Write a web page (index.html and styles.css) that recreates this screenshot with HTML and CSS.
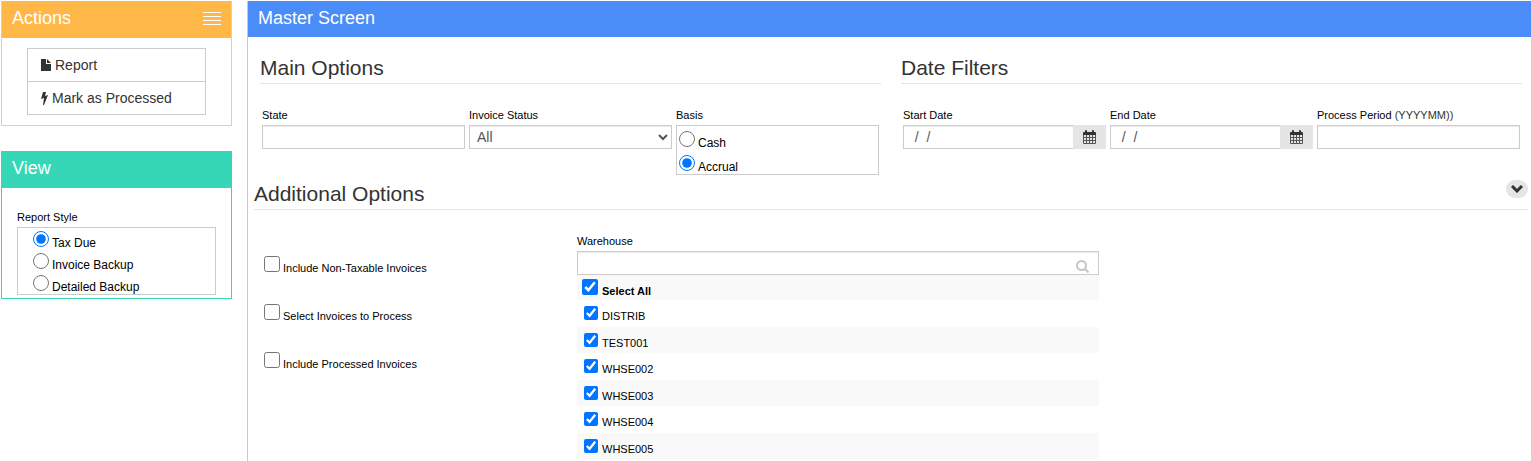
FILE: index.html
```
<!DOCTYPE html>
<html lang="en">
<head>
<meta charset="UTF-8">
<meta name="viewport" content="width=device-width, initial-scale=1.0">
<title>Master Screen</title>
<link rel="stylesheet" href="styles.css">
</head>
<body>

  <div class="page">
    <aside class="sidebar">
      <section class="panel panel-actions">
        <header class="panel-header">
          <h1>Actions</h1>
          <button type="button" class="menu-toggle" aria-label="Toggle actions"><span></span><span></span><span></span><span></span></button>
        </header>
        <div class="action-list">
          <button type="button" class="action">
            <svg width="10" height="12" viewBox="0 0 10 12"><path fill="#333" d="M0 0h5v5h5v7H0zM6 0l4 4H6z"/></svg>
            Report
          </button>
          <button type="button" class="action">
            <svg width="7" height="13" viewBox="0 0 7 13"><path fill="#333" d="M2 0h3L4 4l3-1-4 10H2l1-7-3 1z"/></svg>
            Mark as Processed
          </button>
        </div>
      </section>

      <section class="panel panel-view">
        <header class="panel-header">
          <h1>View</h1>
        </header>
        <div class="report-style">
          <fieldset class="field">
            <legend>Report Style</legend>
            <div class="options">
              <label class="check"><input type="radio" name="style" checked>Tax Due</label>
              <label class="check"><input type="radio" name="style">Invoice Backup</label>
              <label class="check"><input type="radio" name="style">Detailed Backup</label>
            </div>
          </fieldset>
        </div>
      </section>
    </aside>

    <main class="main">
      <header class="panel-header">
        <h1>Master Screen</h1>
      </header>

      <div class="filters">
        <section>
          <h2>Main Options</h2>
          <div class="fields">
            <div class="field">
              <label for="state">State</label>
              <input type="text" id="state" class="control">
            </div>
            <div class="field">
              <label for="status">Invoice Status</label>
              <select id="status" class="control">
                <option>All</option>
              </select>
            </div>
            <fieldset class="field basis">
              <legend>Basis</legend>
              <div class="options">
                <label class="check"><input type="radio" name="basis">Cash</label>
                <label class="check"><input type="radio" name="basis" checked>Accrual</label>
              </div>
            </fieldset>
          </div>
        </section>

        <section>
          <h2>Date Filters</h2>
          <div class="fields">
            <div class="field">
              <label for="start">Start Date</label>
              <div class="date">
                <input type="text" id="start" class="control" value="  /  /">
                <button type="button" aria-label="Pick start date">
                  <svg width="13" height="14" viewBox="0 0 13 14"><path fill="#333" d="M0 3q0-1 1-1h1V1q0-1 1-1t1 1v1h5V1q0-1 1-1t1 1v1h1q1 0 1 1v2H0z"/><path fill="none" stroke="#555" d="M.5 5v8.500h12V5M3.500 5v8M6.500 5v8M9.500 5v8M1 7.500h11M1 10.500h11"/></svg>
                </button>
              </div>
            </div>
            <div class="field">
              <label for="end">End Date</label>
              <div class="date">
                <input type="text" id="end" class="control" value="  /  /">
                <button type="button" aria-label="Pick end date">
                  <svg width="13" height="14" viewBox="0 0 13 14"><path fill="#333" d="M0 3q0-1 1-1h1V1q0-1 1-1t1 1v1h5V1q0-1 1-1t1 1v1h1q1 0 1 1v2H0z"/><path fill="none" stroke="#555" d="M.5 5v8.500h12V5M3.500 5v8M6.500 5v8M9.500 5v8M1 7.500h11M1 10.500h11"/></svg>
                </button>
              </div>
            </div>
            <div class="field">
              <label for="period">Process Period <span class="hint">(YYYYMM))</span></label>
              <input type="text" id="period" class="control">
            </div>
          </div>
        </section>
      </div>

      <div class="section-title">
        <h2>Additional Options</h2>
        <button type="button" class="collapse" aria-label="Collapse">
          <svg width="12" height="8" viewBox="0 0 12 8"><path fill="none" stroke="#333" stroke-width="3" d="M1 1l5 5 5-5"/></svg>
        </button>
      </div>

      <div class="additional">
        <div class="invoice-options">
          <label class="check"><input type="checkbox">Include Non-Taxable Invoices</label>
          <label class="check"><input type="checkbox">Select Invoices to Process</label>
          <label class="check"><input type="checkbox">Include Processed Invoices</label>
        </div>

        <div class="field warehouse">
          <label for="warehouse">Warehouse</label>
          <div class="search">
            <input type="text" id="warehouse" class="control">
            <svg width="13" height="13" viewBox="0 0 13 13"><g fill="none" stroke="#c5c5c5" stroke-width="2"><circle cx="5.5" cy="5.5" r="4.5"/><path d="M8.5 8.5l4 4"/></g></svg>
          </div>
          <div class="warehouse-list">
            <label class="check select-all"><input type="checkbox" checked>Select All</label>
            <label class="check"><input type="checkbox" checked>DISTRIB</label>
            <label class="check"><input type="checkbox" checked>TEST001</label>
            <label class="check"><input type="checkbox" checked>WHSE002</label>
            <label class="check"><input type="checkbox" checked>WHSE003</label>
            <label class="check"><input type="checkbox" checked>WHSE004</label>
            <label class="check"><input type="checkbox" checked>WHSE005</label>
          </div>
        </div>
      </div>
    </main>
  </div>

</body>
</html>
```

FILE: styles.css
```
* {
  box-sizing: border-box;
}

body {
  margin: 0;
  background-color: #fff;
  color: #000;
  font-family: "Liberation Sans", Arial, sans-serif;
  font-size: 11px;
}

h1,
h2 {
  margin: 0;
  font-weight: normal;
}

button,
input,
select {
  margin: 0;
  font-family: inherit;
}

button {
  padding: 0;
  border: none;
  cursor: pointer;
}

.page {
  display: flex;
  gap: 15px;
  min-height: 100vh;
  padding: 1px 0 0 1px;
}

/* Sidebar */
.sidebar {
  flex: 0 0 231px;
}

.panel {
  margin-bottom: 25px;
  border: 1px solid;
  border-top: none;
}

.panel-actions {
  border-color: #fbcb80;
}

.panel-view {
  border-color: #36d7b7;
}

.panel-header {
  display: flex;
  justify-content: space-between;
  align-items: center;
  padding: 0 10px 3px;
  color: #fff;
}

.panel-header h1 {
  font-size: 18px;
  line-height: 34px;
}

.panel-actions .panel-header {
  background-color: #ffb848;
}

.panel-view .panel-header {
  background-color: #36d7b7;
}

.menu-toggle {
  display: flex;
  flex-direction: column;
  gap: 3px;
  width: 18px;
  background: none;
}

.menu-toggle span {
  height: 1px;
  background-color: #fff;
}

.action-list {
  padding: 10px 25px;
}

.action {
  display: flex;
  align-items: center;
  gap: 4px;
  width: 100%;
  height: 34px;
  padding: 0 13px;
  border: 1px solid #ccc;
  background-color: #fff;
  color: #333;
  font-size: 14px;
}

.action + .action {
  margin-top: -1px;
}

/* Form fields */
.field {
  min-width: 0;
  margin: 0;
  padding: 0;
  border: none;
}

.field > label,
.field > legend {
  display: block;
  margin-bottom: 2px;
  padding: 0;
  line-height: 16px;
}

.hint {
  color: #333;
}

.control {
  display: block;
  width: 100%;
  height: 24px;
  padding: 0 3px;
  border: 1px solid #ccc;
  border-radius: 0;
  background-color: #fff;
  box-shadow: inset 0 1px 1px rgba(0, 0, 0, 0.08);
  color: #555;
  font-size: 14px;
}

.check {
  display: flex;
  align-items: baseline;
  gap: 3px;
  line-height: 14px;
}

.check input {
  flex: none;
  width: 16px;
  height: 16px;
}

.options {
  border: 1px solid #ccc;
  font-size: 12px;
}

.report-style {
  padding: 21px 15px 3px;
}

.report-style .check {
  height: 22px;
  padding: 3px 0 0 15px;
}

.basis .check {
  height: 24px;
  padding: 5px 0 0 2px;
}

.date {
  display: flex;
}

.date .control {
  flex: 1;
  min-width: 0;
  border-right: none;
}

.date button {
  display: flex;
  flex: 0 0 33px;
  align-items: center;
  justify-content: center;
  background-color: #e5e5e5;
}

/* Main */
.main {
  flex: 1;
  min-width: 0;
  border-left: 1px solid #b5cbf5;
}

.main > .panel-header {
  padding-bottom: 2px;
  background-color: #4b8df8;
}

.main h2 {
  padding-bottom: 1px;
  border-bottom: 1px solid #e5e5e5;
  color: #333;
  font-size: 21px;
  line-height: 28px;
}

.filters {
  display: grid;
  grid-template-columns: 1fr 1fr;
  gap: 20px;
  padding: 17px 9px 5px 12px;
}

.fields {
  display: grid;
  grid-template-columns: repeat(3, 1fr);
  gap: 4px;
  padding: 23px 2px 0;
}

.section-title {
  display: flex;
  align-items: flex-start;
  margin: 0 3px 0 6px;
  border-bottom: 1px solid #e5e5e5;
}

.main .section-title h2 {
  flex: 1;
  border-bottom: none;
}

.collapse {
  display: flex;
  align-items: center;
  justify-content: center;
  width: 22px;
  height: 18px;
  border-radius: 9px;
  background-color: #e5e5e5;
}

.additional {
  display: grid;
  grid-template-columns: 317fr 522fr 423fr;
  padding: 23px 9px 0 12px;
}

.invoice-options {
  display: flex;
  flex-direction: column;
  gap: 29px;
  padding: 23px 0 0 4px;
}

.search {
  position: relative;
}

.search svg {
  position: absolute;
  right: 10px;
  bottom: 2px;
}

.warehouse-list .check {
  height: 26px;
  gap: 4px;
  padding: 6px 0 0 7px;
}

.warehouse-list .check:nth-child(even) {
  height: 27px;
}

.warehouse-list .check:nth-child(odd) {
  background-color: #f9f9f9;
}

.warehouse-list input {
  width: 14px;
  height: 14px;
}

.warehouse-list .select-all {
  height: 25px;
  padding: 4px 0 0 5px;
  font-weight: bold;
}

.select-all input {
  width: 16px;
  height: 16px;
}
```
